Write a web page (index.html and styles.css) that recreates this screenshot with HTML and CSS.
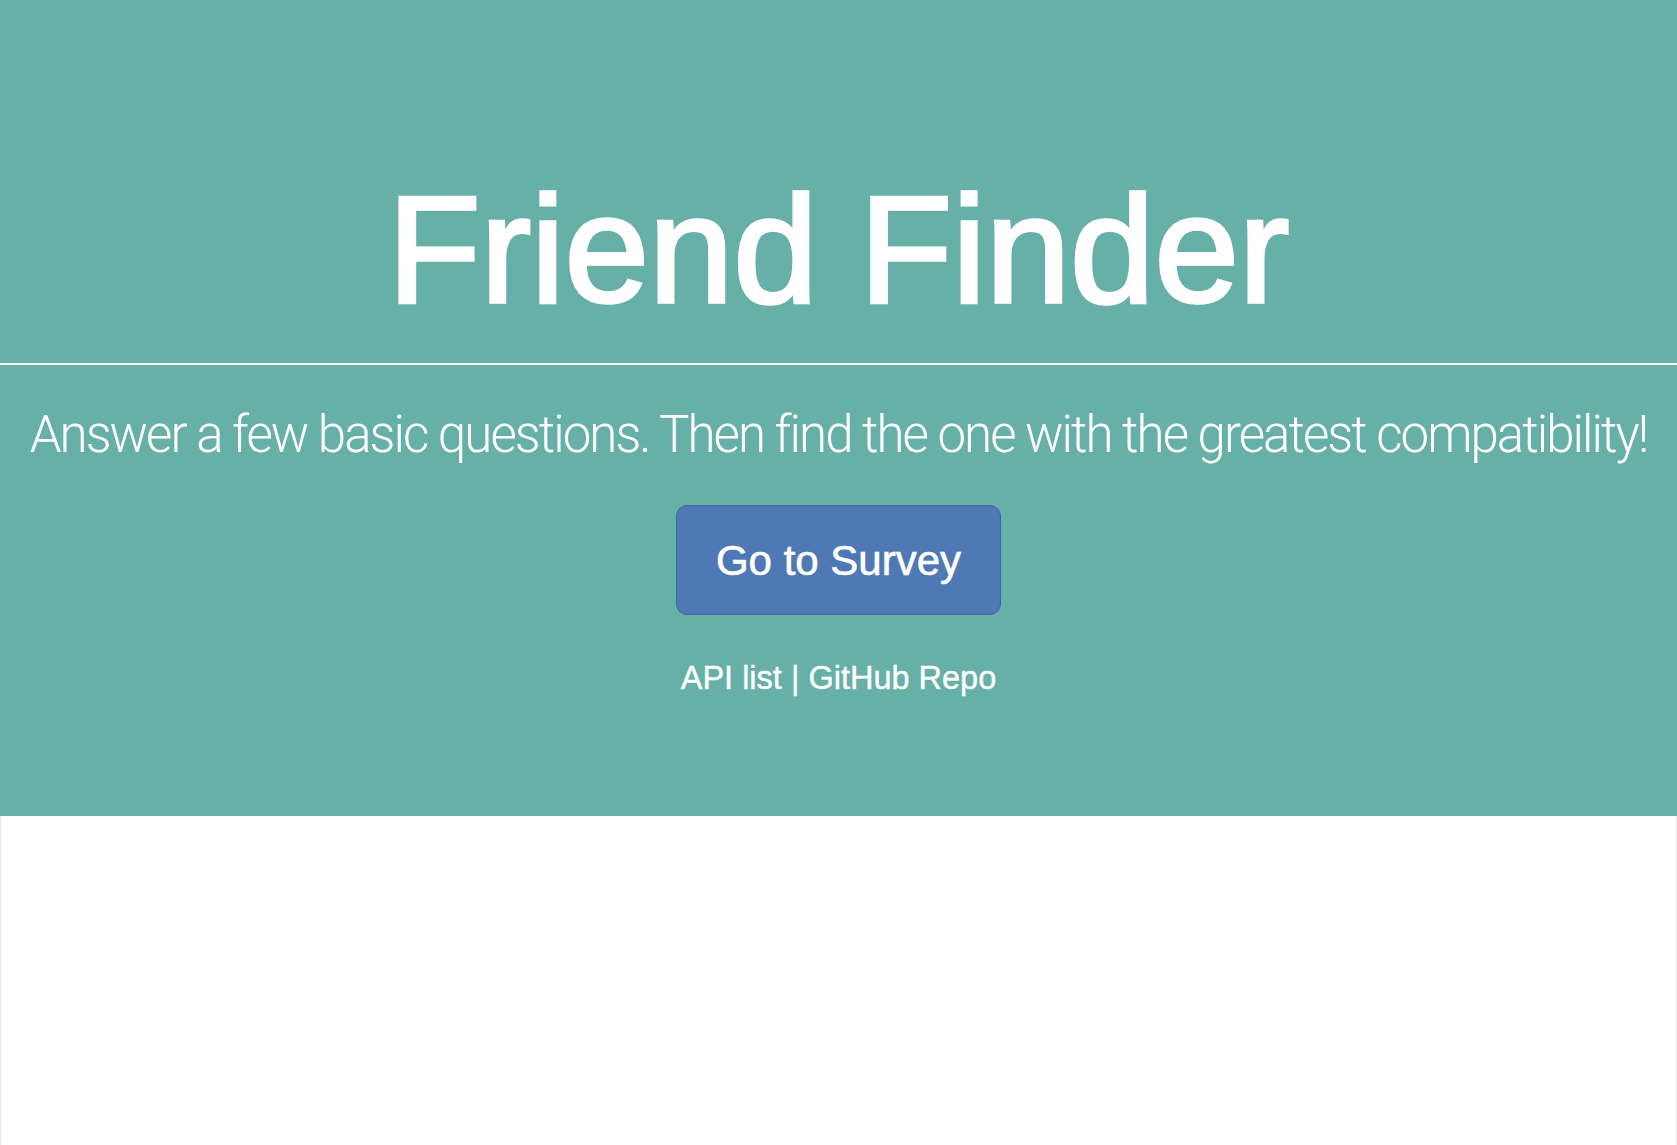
FILE: index.html
```html
<!DOCTYPE html>
<html lang="en">
<head>
<meta charset="utf-8">
<title>Friend Finder</title>
<link rel="stylesheet" href="styles.css">
</head>
<body>
  <header class="jumbotron">
    <h1 class="title">Friend Finder</h1>
    <hr class="divider">
    <p class="lead">Answer a few basic questions. Then find the one with the greatest compatibility!</p>
    <a class="btn-survey" href="#">Go to Survey</a>
    <p class="links"><a href="#">API list</a> | <a href="#">GitHub Repo</a></p>
  </header>
  <main class="below"></main>
</body>
</html>
```
FILE: styles.css
```css
html, body {
  margin: 0;
  padding: 0;
  height: 100%;
}
body {
  background: #ffffff;
  font-family: "Liberation Sans", Arial, sans-serif;
  display: flex;
  flex-direction: column;
}
.jumbotron {
  background: #67b0a8;
  height: 816px;
  flex: 0 0 816px;
  display: flex;
  flex-direction: column;
  align-items: center;
  color: #ffffff;
  box-sizing: border-box;
  padding-top: 173px;
}
.title {
  margin: 0;
  font-family: "Liberation Sans", Arial, sans-serif;
  font-weight: 400;
  font-size: 152px;
  line-height: 152px;
  letter-spacing: -0.2px;
  -webkit-text-stroke: 3.5px #ffffff;
}
.divider {
  align-self: stretch;
  margin: 38px 0 0 0;
  border: 0;
  height: 2px;
  background: #ffffff;
}
.lead {
  margin: 39px 0 0 0;
  font-family: Roboto, "Liberation Sans", sans-serif;
  font-weight: 300;
  font-size: 51px;
  line-height: 61px;
  letter-spacing: -1.95px;
  white-space: nowrap;
}
.btn-survey {
  margin-top: 40px;
  box-sizing: border-box;
  width: 325px;
  height: 110px;
  padding: 29px 0 27px;
  background: #4f79b4;
  border: 1px solid #3e66a3;
  border-radius: 11px;
  color: #ffffff;
  text-decoration: none;
  text-align: center;
  font-size: 42px;
  line-height: 52px;
  -webkit-text-stroke: 0.6px #ffffff;
}
.links {
  margin: 45px 0 0 0;
  font-size: 32.5px;
  line-height: normal;
  color: #ffffff;
  -webkit-text-stroke: 0.4px #ffffff;
}
.links a {
  color: #ffffff;
  text-decoration: none;
}
.below {
  flex: 1 1 auto;
  border-left: 1px solid #e6e6e6;
  border-right: 1px solid #e6e6e6;
}
```
